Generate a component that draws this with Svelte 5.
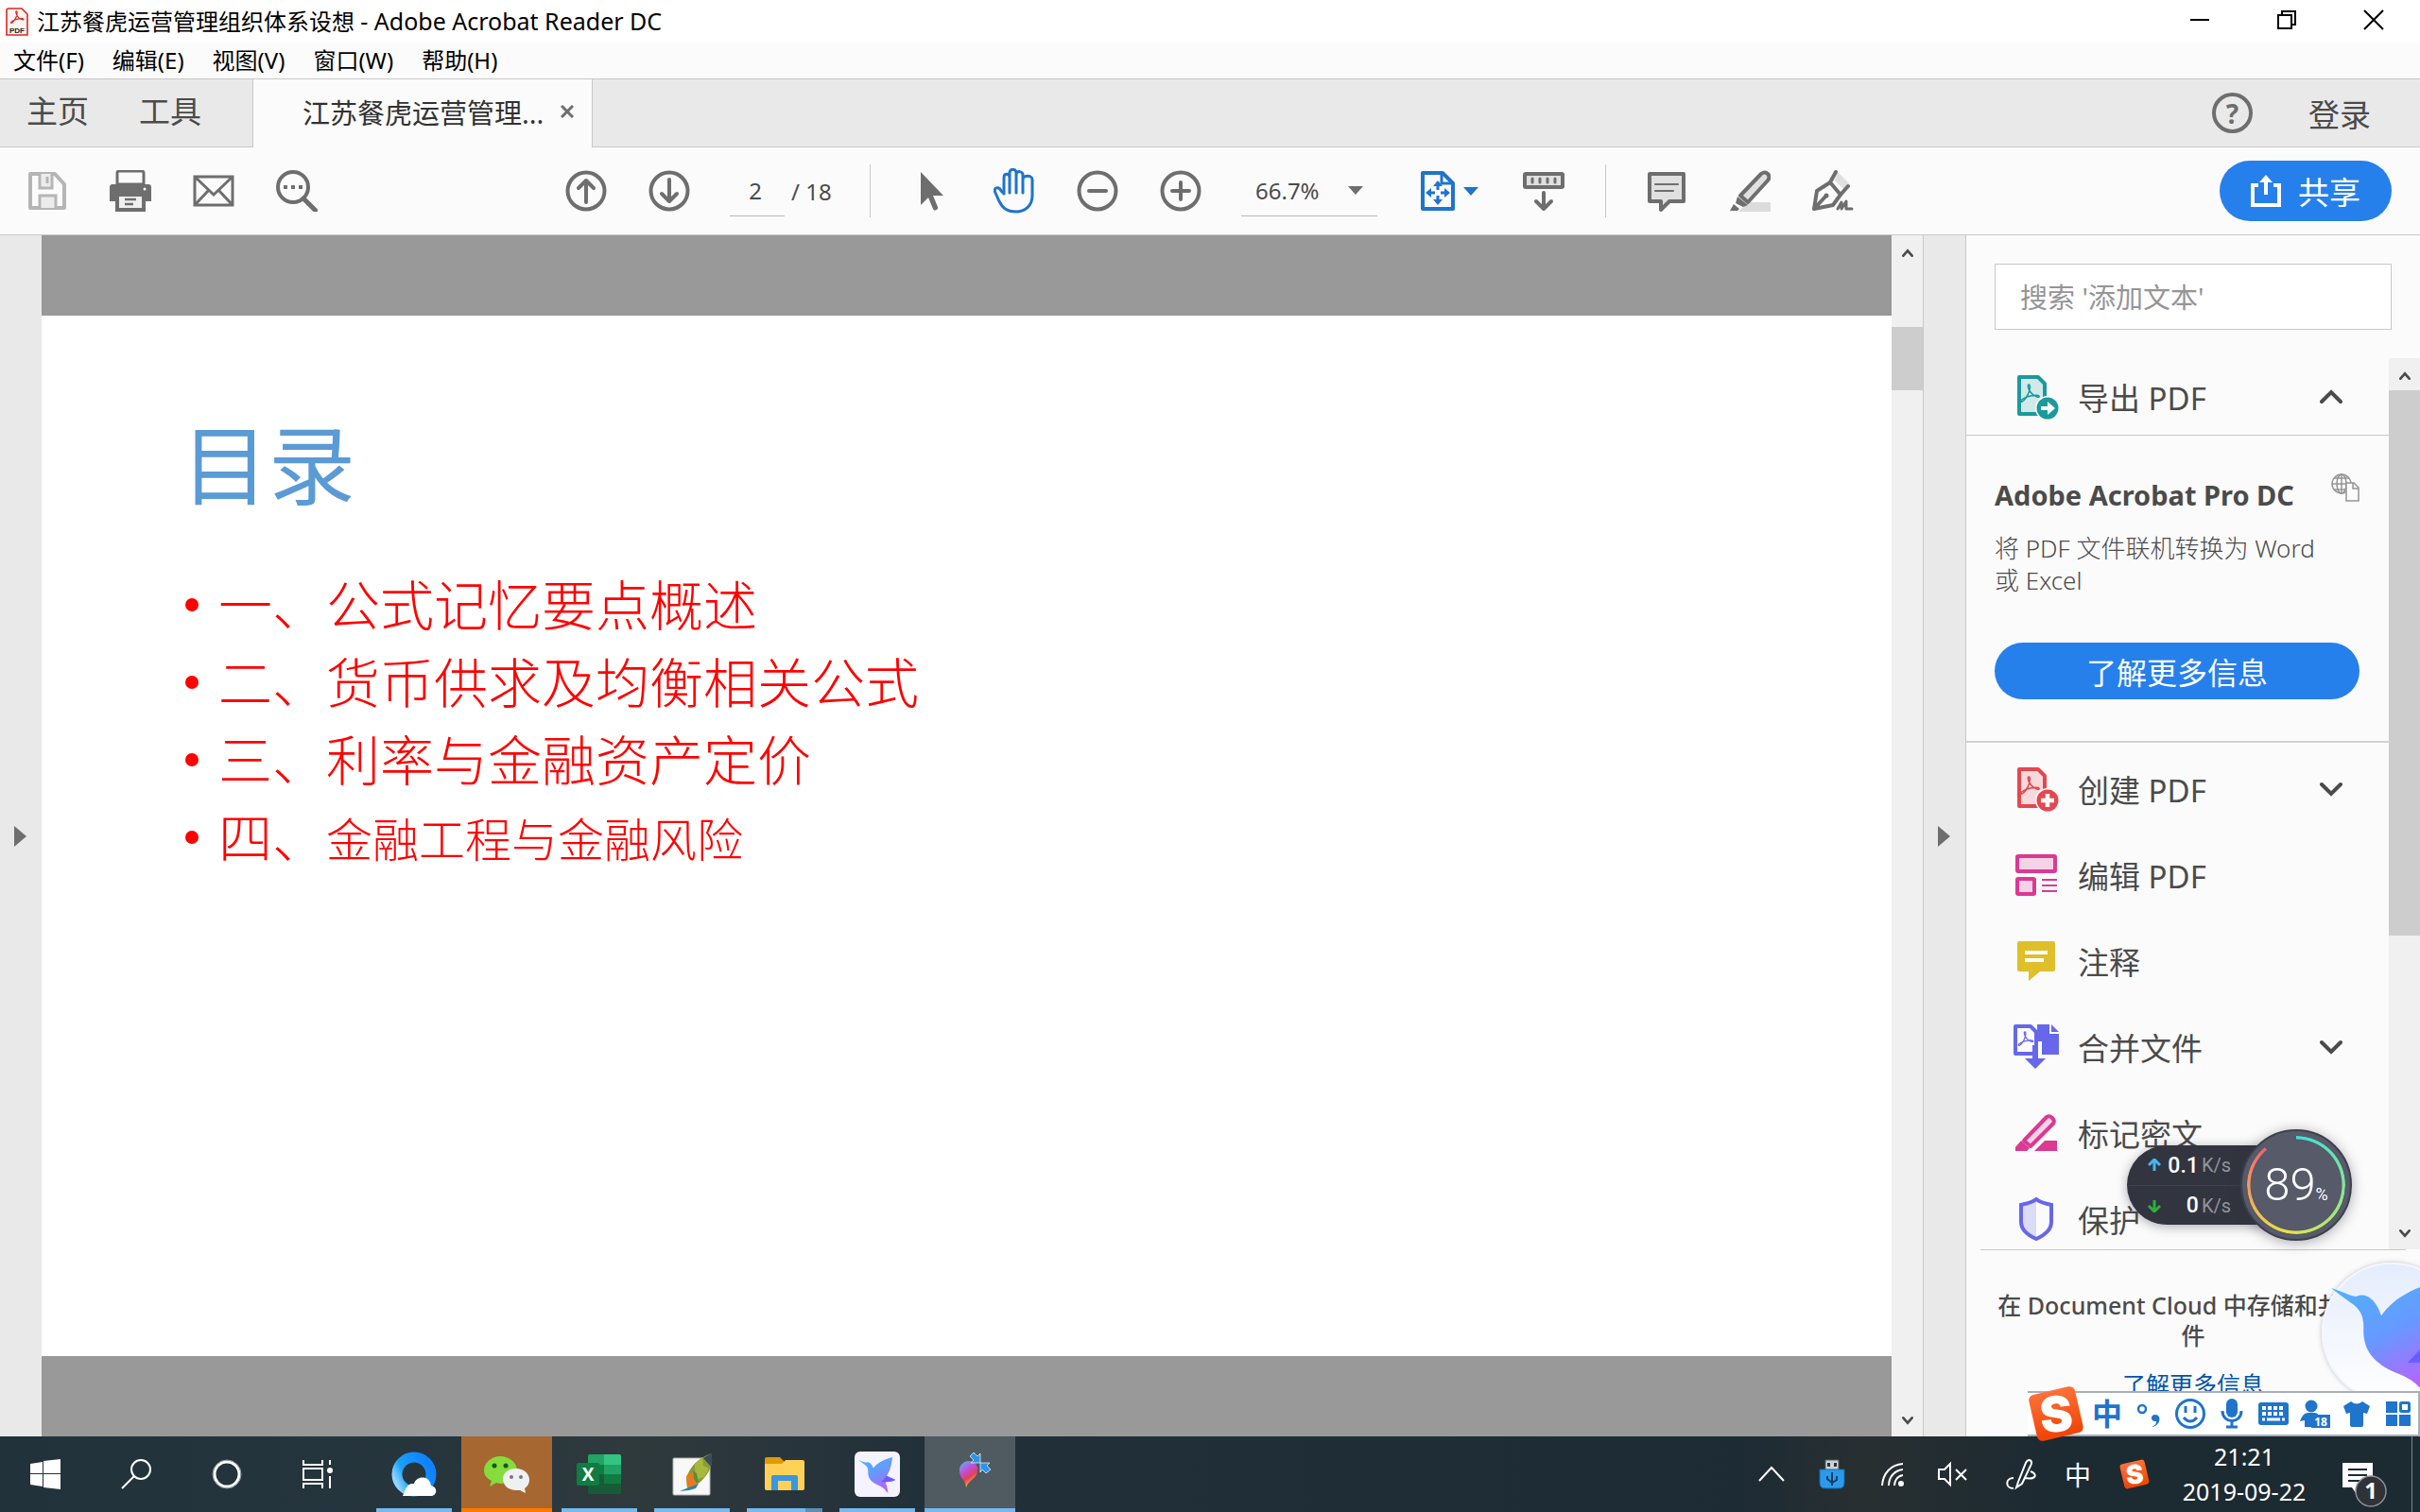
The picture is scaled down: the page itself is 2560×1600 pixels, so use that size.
<script>
  const menus = ['文件(F)', '编辑(E)', '视图(V)', '窗口(W)', '帮助(H)'];

  const tools = [
    { icon: 'create', label: '创建 PDF', more: true },
    { icon: 'edit', label: '编辑 PDF', more: false },
    { icon: 'note', label: '注释', more: false },
    { icon: 'combine', label: '合并文件', more: true },
    { icon: 'redact', label: '标记密文', more: false },
    { icon: 'protect', label: '保护', more: false }
  ];

  const tasks = [
    { icon: 'browser', label: 'QQ浏览器', className: '' },
    { icon: 'wechat', label: '微信', className: 'alert' },
    { icon: 'excel', label: 'Excel', className: '' },
    { icon: 'feather', label: '图片', className: '' },
    { icon: 'folder', label: '文件资源管理器', className: 'stacked' },
    { icon: 'bird', label: '迅雷', className: '' },
    { icon: 'paint', label: '画图 3D', className: 'active' }
  ];

  let page = $state('2');
  let search = $state('');
</script>

{#snippet swirl(color)}
  <path d="M16 11c2 0 2 5-1 11-3 5-6 8-7 7-1-2 5-5 10-6s10-1 9 1c-1 1-6-1-9-5s-3-8-2-8z" fill="none" stroke={color} stroke-width="1.6" />
{/snippet}

{#snippet sogou()}
  <defs>
    <linearGradient id="sg" x1="0" y1="0" x2="0" y2="1">
      <stop offset="0" stop-color="#ff7038" />
      <stop offset="1" stop-color="#ef4406" />
    </linearGradient>
  </defs>
  <rect x="5" y="5" width="50" height="50" rx="6" fill="url(#sg)" transform="rotate(-13 30 30)" />
  <text class="sogou-s" x="30" y="49" text-anchor="middle" transform="rotate(-6 30 30)">S</text>
{/snippet}

{#snippet hummingbird()}
  <defs>
    <linearGradient id="hb" x1="0.1" y1="0" x2="0.6" y2="1">
      <stop offset="0" stop-color="#4fb4f8" />
      <stop offset="0.5" stop-color="#6699ff" />
      <stop offset="1" stop-color="#c25cff" />
    </linearGradient>
  </defs>
  <path d="M2 15c8 3 12 5 17 6 6-3 13 1 17 13 10-14 24-19 44-26-2 20-7 34-13 44l20 9c-7 4-14 5-23 5 3 8 5 15 6 26-8-10-12-14-21-18-16-6-26-15-25-32 0-9-3-13-9-17-5-4-10-7-13-10z" fill="url(#hb)" />
  <path d="M67 52 54 66c10 0 25-1 33-5z" fill="#6a5cff" />
{/snippet}

{#snippet toolIcon(name)}
  <svg class="tool-icon" viewBox="0 0 48 48" aria-hidden="true">
    {#if name === 'export' || name === 'create'}
      {@const color = name === 'export' ? '#1c999c' : '#e34850'}
      <path d="M6 3h20l7 7v32H6z" fill={color} fill-opacity="0.18" stroke={color} stroke-width="4" stroke-linejoin="round" />
      {@render swirl(color)}
      <circle cx="36" cy="36" r="13" fill="#fbfbfb" />
      <circle cx="36" cy="36" r="11.5" fill={color} />
      {#if name === 'export'}
        <path d="M29 34h7v-5l8 7-8 7v-5h-7z" fill="#fff" />
      {:else}
        <path d="M36 29v14M29 36h14" stroke="#fff" stroke-width="4.5" />
      {/if}
    {:else if name === 'edit'}
      <g fill="#f5d3e6" stroke="#dc3993" stroke-width="4">
        <rect x="4" y="4" width="40" height="16" rx="1" />
        <rect x="4" y="28" width="18" height="16" rx="1" />
      </g>
      <path d="M30 29h16M30 35h16M30 41h16" stroke="#dc3993" stroke-width="2" />
    {:else if name === 'note'}
      <path d="M6 3h36q2 0 2 2v28q0 2-2 2H28l-12 10V35H6q-2 0-2-2V5q0-2 2-2z" fill="#dfbf2a" />
      <path d="M12 15h24M12 23h20" stroke="#fff" stroke-width="4" />
    {:else if name === 'combine'}
      <path d="M20 31H2V2h16l6 6v14" fill="none" stroke="#6767ec" stroke-width="4" stroke-linejoin="round" />
      <path d="M25 0h13v10h10v22H30V18h-5zM40 0l8 8h-8z" fill="#6767ec" />
      <g transform="translate(-1 -1) scale(0.8)">{@render swirl('#6767ec')}</g>
      <path d="M20 22h6v14h8L23 47 12 36h8z" fill="#6767ec" />
    {:else if name === 'redact'}
      <path d="M11 32 35 7q3-2 6 1t1 6L18 38z" fill="#f5d3e6" stroke="#dc3993" stroke-width="4" stroke-linejoin="round" />
      <path d="m8 32 9 8-3 3H2v-4zM22 43l11-11h13v11z" fill="#dc3993" />
    {:else if name === 'protect'}
      <path d="M24 3c5 4 11 5 16 6v18c0 9-7 15-16 19C15 42 8 36 8 27V9c5-1 11-2 16-6z" fill="#fbfbfb" />
      <path d="M24 4v40C15 40 8 35 8 27V9c6-1 11-2 16-5z" fill="#dcdcf8" />
      <path d="M24 3c5 4 11 5 16 6v18c0 9-7 14-16 18C15 41 8 36 8 27V9c5-1 11-2 16-6z" fill="none" stroke="#6767ec" stroke-width="4" />
    {/if}
  </svg>
{/snippet}

{#snippet taskIcon(name)}
  <svg class="task-icon" viewBox="0 0 48 48" aria-hidden="true">
    {#if name === 'browser'}
      <defs>
        <linearGradient id="qb" x1="0" y1="0.8" x2="1" y2="0.3">
          <stop offset="0" stop-color="#8fd6ff" />
          <stop offset="0.3" stop-color="#1b9ffa" />
          <stop offset="1" stop-color="#0f82ff" />
        </linearGradient>
      </defs>
      <circle cx="24" cy="24" r="18" fill="none" stroke="url(#qb)" stroke-width="11" />
      <path d="M12 47c3-8 5-14 12-13 2-8 16-10 18 2 8 2 6 11 0 11z" fill="#fff" />
    {:else if name === 'wechat'}
      <path d="M17 5c10 0 18 7 18 15s-8 14-18 14l-4-1-7 4 2-6C2 28 0 24 0 20 0 12 8 5 17 5z" fill="#86dc3c" />
      <circle cx="11" cy="15" r="2.5" fill="#14591e" />
      <circle cx="23" cy="15" r="2.5" fill="#14591e" />
      <path d="M34 18c8 0 14 5 14 12 0 4-2 7-5 9l1 5-6-3h-4c-8 0-14-5-14-12s6-11 14-11z" fill="#eef0f2" />
      <circle cx="29" cy="27" r="2" fill="#777" />
      <circle cx="39" cy="27" r="2" fill="#777" />
    {:else if name === 'excel'}
      <rect x="12" y="3" width="35" height="42" rx="2" fill="#185c37" />
      <path d="M12 5q0-2 2-2h15v11H12z" fill="#21a366" />
      <path d="M29 3h16q2 0 2 2v9H29z" fill="#33c481" />
      <path d="M12 14h17v10H12z" fill="#107c41" />
      <path d="M29 14h18v10H29z" fill="#21a366" />
      <path d="M29 24h18v10H29z" fill="#107c41" />
      <rect x="0" y="12" width="24" height="24" rx="2" fill="#107c41" />
      <text class="excel-x" x="12" y="31" text-anchor="middle">X</text>
    {:else if name === 'feather'}
      <rect x="4" y="7" width="39" height="39" rx="1" fill="#f8f8f8" stroke="#b5b5b5" />
      <path d="m11 42 8-3-1-10c3-13 13-22 26-27 4 11-3 25-16 34l-6 3-11 3z" fill="#8a9c33" />
      <path d="m27 13 8-7 1 9 6 3-5 9-9 3z" fill="#a8b83e" />
      <path d="m24 20 5 3 2 9-6 3z" fill="#5d8c3c" />
      <path d="m19 37-1-11c3-3 5-3 7-5l1 8 4 6-7 4z" fill="#e67a22" />
      <path d="M36 7l8-5c2 6 1 10 0 14z" fill="#3b4a5c" />
      <path d="m11 42 10-4 10-4-3 5-7 2z" fill="#2b86a8" />
    {:else if name === 'folder'}
      <path d="M3 8q0-2 2-2h14l4 4v5H3z" fill="#e09a00" />
      <path d="M3 13h18l4-4h18q2 0 2 2v28q0 2-2 2H5q-2 0-2-2z" fill="#ffd257" />
      <path d="M10 41V27q0-2 2-2h24q2 0 2 2v14h-7V31H17v10z" fill="#3a96dd" />
    {:else if name === 'bird'}
      <rect width="48" height="48" rx="6" fill="#f4f3ff" />
      <svg x="2" y="2" width="44" height="44" viewBox="0 0 90 96">{@render hummingbird()}</svg>
    {:else if name === 'paint'}
      <defs>
        <linearGradient id="p3" x1="0" y1="0" x2="0.5" y2="1">
          <stop offset="0" stop-color="#47c7f2" />
          <stop offset="0.4" stop-color="#bb55dd" />
          <stop offset="0.7" stop-color="#e23e62" />
          <stop offset="1" stop-color="#ffc500" />
        </linearGradient>
      </defs>
      <path d="M23 10c8 0 12 8 7 16-3 4-7 5-10 12-1-8-6-9-7-16-1-7 4-12 10-12z" fill="url(#p3)" />
      <path d="m24 5 4-4 4 4 3-3v10H25l3-3zM35 12h10l-3 3 4 4-5 4-4-4-2 3z" fill="#2b95e8" stroke="#fff" stroke-width="0.7" />
    {/if}
  </svg>
{/snippet}

{#snippet chevron(className, d)}
  <svg class={className} viewBox="0 0 24 24" aria-hidden="true"><path {d} fill="none" stroke="#4b4b4b" stroke-width="4" stroke-linecap="round" /></svg>
{/snippet}

<div class="desktop">
  <header class="title-bar">
    <svg class="app-icon" viewBox="0 0 24 30" aria-hidden="true">
      <path d="M3 1h14l6 6v22H1V3q0-2 2-2z" fill="#fff4f4" stroke="#e1251b" stroke-width="1.6" />
      <g transform="translate(0 -4) scale(0.7)">{@render swirl('#e1251b')}</g>
      <text class="app-icon-text" x="12" y="27" text-anchor="middle">PDF</text>
    </svg>
    <h1>江苏餐虎运营管理组织体系设想 <span>- Adobe Acrobat Reader DC</span></h1>
    <div class="window-buttons">
      <button aria-label="最小化"><svg viewBox="0 0 20 20"><path d="M0 10h20" /></svg></button>
      <button aria-label="还原"><svg viewBox="0 0 20 20"><path d="M1 5h14v14H1zM5 5V1h14v14h-4" /></svg></button>
      <button aria-label="关闭"><svg viewBox="0 0 20 20"><path d="m0 0 20 20M20 0 0 20" /></svg></button>
    </div>
  </header>

  <nav class="menu-bar">
    {#each menus as menu}
      <button>{menu}</button>
    {/each}
  </nav>

  <div class="tab-bar">
    <button class="home-tab">主页</button>
    <button class="home-tab">工具</button>
    <div class="doc-tab">
      <span>江苏餐虎运营管理...</span>
      <button aria-label="关闭标签">
        <svg viewBox="0 0 14 14"><path d="m1 1 12 12M13 1 1 13" stroke="#6e6e6e" stroke-width="3" /></svg>
      </button>
    </div>
    <div class="tab-right">
      <button class="help" aria-label="帮助">?</button>
      <button class="login">登录</button>
    </div>
  </div>

  <div class="toolbar">
    <div class="group">
      <button aria-label="保存">
        <svg viewBox="0 0 44 44">
          <path d="M4 4h26l10 11v25H4z" fill="none" stroke="#b5b5b5" stroke-width="4" stroke-linejoin="round" />
          <path d="M14 4v15h13V4M14 40V27h17v13" fill="#ececec" stroke="#b5b5b5" stroke-width="3" />
          <path d="M22 7v7" stroke="#b5b5b5" stroke-width="3" />
        </svg>
      </button>
      <button aria-label="打印">
        <svg viewBox="0 0 44 44">
          <path d="M8 15V3q0-2 2-2h24q2 0 2 2v12z" fill="#fbfbfb" stroke="#6e6e6e" stroke-width="3" />
          <path d="M3 15h38q3 0 3 3v15H0V18q0-3 3-3z" fill="#6e6e6e" />
          <path d="M8 26h28v16H8z" fill="#f0f0f0" stroke="#6e6e6e" stroke-width="4" />
          <path d="M16 31h12M16 36h9" stroke="#6e6e6e" stroke-width="2.5" />
          <circle cx="37" cy="20" r="1.5" fill="#fff" />
        </svg>
      </button>
      <button aria-label="邮件">
        <svg viewBox="0 0 44 44">
          <path d="M2 7h40v30H2zM2 7l20 19L42 7M2 37l15-16M42 37 27 21" fill="none" stroke="#6e6e6e" stroke-width="3" />
        </svg>
      </button>
      <button aria-label="查找">
        <svg viewBox="0 0 44 44">
          <circle cx="18" cy="18" r="16" fill="none" stroke="#6e6e6e" stroke-width="4" />
          <path d="m29 30 13 13" stroke="#6e6e6e" stroke-width="5" stroke-linecap="round" />
          <path d="M8 18h4M16 18h4M24 18h4" stroke="#6e6e6e" stroke-width="4" />
        </svg>
      </button>
    </div>

    <div class="group nav-group">
      <button aria-label="上一页">
        <svg viewBox="0 0 44 44"><circle cx="22" cy="22" r="19.5" /><path d="M22 34V11M14 19l8-8 8 8" /></svg>
      </button>
      <button aria-label="下一页">
        <svg viewBox="0 0 44 44"><circle cx="22" cy="22" r="19.5" /><path d="M22 10v23M14 25l8 8 8-8" /></svg>
      </button>
    </div>
    <input class="page-input" aria-label="页码" bind:value={page} />
    <span class="page-total">/ 18</span>
    <div class="divider"></div>

    <div class="group view-group">
      <button aria-label="选择">
        <svg viewBox="0 0 44 44"><path d="M11 2v35l8-8 5 12c1 3 6 1 5-2l-5-12h11z" fill="#6e6e6e" stroke="none" /></svg>
      </button>
      <button aria-label="手形工具">
        <svg class="hand" viewBox="0 0 44 48">
          <path d="M11 27V10c0-5 6-5 6 0V5c0-5 7-5 7 0v2c0-5 7-4 7 0v5c0-5 10-5 10 0v17c0 11-8 17-17 17-11 0-15-5-18-11L2 26c-3-6 4-7 6-2l3 3M17 10v16M24 5v21M31 9v17" />
        </svg>
      </button>
      <button aria-label="缩小">
        <svg viewBox="0 0 44 44"><circle cx="22" cy="22" r="19.5" /><path d="M13 22h18" /></svg>
      </button>
      <button aria-label="放大">
        <svg viewBox="0 0 44 44"><circle cx="22" cy="22" r="19.5" /><path d="M13 22h18M22 13v18" /></svg>
      </button>
    </div>
    <button class="zoom-level">66.7%<i class="caret"></i></button>
    <button class="fit" aria-label="适合页面">
      <svg viewBox="0 0 44 44">
        <path d="M6 3h21l11 11v27H6z" fill="none" stroke="#1f74cc" stroke-width="4" stroke-linejoin="round" />
        <path d="M26 3v11h12" fill="none" stroke="#1f74cc" stroke-width="3" />
        <path d="m22 11-5 6h10zM22 37l-5-6h10zM9 24l6-5v10zM35 24l-6-5v10z" fill="#1f74cc" />
        <path d="M22 16v5M22 27v5M14 24h5M25 24h5" stroke="#1f74cc" stroke-width="3" />
      </svg>
      <i class="caret blue"></i>
    </button>
    <button class="ruler" aria-label="滚动模式">
      <svg viewBox="0 0 44 44">
        <rect x="2" y="4" width="40" height="14" rx="1" fill="#e0e0e0" />
        <path d="M10 9v4M18 9v4M26 9v4M34 9v4" stroke-width="3" />
        <path d="M22 24v17M14 33l8 8 8-8" />
      </svg>
    </button>
    <div class="divider"></div>

    <div class="group mark-group">
      <button aria-label="注释">
        <svg viewBox="0 0 44 44">
          <path d="M4 4h36v29H25l-9 9v-9H4z" fill="#e0e0e0" />
          <path d="M10 15h24M10 22h19" stroke-width="2" />
        </svg>
      </button>
      <button aria-label="高亮">
        <svg viewBox="0 0 44 44">
          <path d="M20 34h24v10H10z" fill="#dcdcdc" stroke="none" />
          <path d="M12 27 34 4q4-3 7 0t0 7L20 34z" fill="#e0e0e0" />
          <path d="m9 28 11 9-5 2-8-4zM5 36l6 5-2 2H1z" fill="#6e6e6e" stroke="none" />
        </svg>
      </button>
      <button aria-label="签名">
        <svg viewBox="0 0 44 44">
          <path d="m24 11 3-9 12 12-5 7z" fill="#e0e0e0" stroke="none" />
          <path d="M2 41 5 22l14-9 11 13-8 11zM2 41l12-13M19 13l6-11M30 26l8-9" />
          <circle cx="15" cy="27" r="2.5" fill="#6e6e6e" stroke="none" />
          <path d="m27 41 4-7v7l5-8v8h6" stroke-width="3" />
        </svg>
      </button>
    </div>
    <button class="share">
      <svg viewBox="0 0 32 34" aria-hidden="true"><path d="M8 11H2v21h28V11h-6M16 21V4" fill="none" stroke="#fff" stroke-width="4" /><path d="m16 0 7 8H9z" fill="#fff" /></svg>
      共享
    </button>
  </div>

  <div class="workspace">
    <div class="gutter"><i class="arrow"></i></div>
    <main class="viewer">
      <article class="page">
        <h2>目录</h2>
        <ul>
          <li>一、公式记忆要点概述</li>
          <li>二、货币供求及均衡相关公式</li>
          <li>三、利率与金融资产定价</li>
          <li>四、<small>金融工程与金融风险</small></li>
        </ul>
      </article>
    </main>
    <div class="scrollbar doc-scroll">
      {@render chevron('scroll-arrow', 'm5 16 7-8 7 8')}
      <div class="thumb"></div>
      {@render chevron('scroll-arrow', 'm5 8 7 8 7-8')}
    </div>
    <div class="gutter right"><i class="arrow"></i></div>

    <aside>
      <div class="search-box">
        <input type="text" aria-label="搜索工具" placeholder="搜索 '添加文本'" bind:value={search} />
      </div>
      <div class="panel">
        <div class="panel-content">
          <button class="tool export">
            {@render toolIcon('export')}
            <span>导出 PDF</span>
            {@render chevron('toggle', 'm2 17 10-10 10 10')}
          </button>
          <section class="promo">
            <div class="promo-head">
              <h3>Adobe Acrobat Pro DC</h3>
              <svg viewBox="0 0 30 30" aria-hidden="true">
                <g fill="none" stroke="#959595" stroke-width="1.5">
                  <circle cx="11" cy="11" r="10" />
                  <ellipse cx="11" cy="11" rx="5" ry="10" />
                  <path d="M1 11h20M3 5h16M3 17h16M11 1v20" />
                  <path d="M16 10h8l5 5v14H16z" fill="#fbfbfb" />
                  <path d="M23 10v6h6" />
                </g>
              </svg>
            </div>
            <p>将 PDF 文件联机转换为 Word<br />或 Excel</p>
            <button class="learn">了解更多信息</button>
          </section>
          <div class="tool-list">
            {#each tools as tool}
              <button class="tool">
                {@render toolIcon(tool.icon)}
                <span>{tool.label}</span>
                {#if tool.more}
                  {@render chevron('toggle', 'm2 7 10 10L22 7')}
                {/if}
              </button>
            {/each}
          </div>
        </div>
        <div class="scrollbar panel-scroll">
          {@render chevron('scroll-arrow', 'm5 16 7-8 7 8')}
          <div class="thumb"></div>
          {@render chevron('scroll-arrow', 'm5 8 7 8 7-8')}
        </div>
      </div>
      <footer>
        <p>在 Document Cloud 中存储和共享文<br />件</p>
        <a href="#cloud">了解更多信息</a>
      </footer>
    </aside>
  </div>

  <div class="taskbar">
    <button class="task system" aria-label="开始">
      <svg viewBox="0 0 32 32"><path d="m0 5 13-2v12H0zM14 2l18-2v15H14zM0 16h13v13L0 27zM14 16h18v16l-18-2z" fill="#fff" /></svg>
    </button>
    <button class="task system" aria-label="搜索">
      <svg viewBox="0 0 32 32"><circle cx="21" cy="11" r="10" fill="none" stroke="#fff" stroke-width="2" /><path d="M14 18 1 31" stroke="#fff" stroke-width="2" /></svg>
    </button>
    <button class="task system" aria-label="Cortana">
      <svg viewBox="0 0 32 32"><circle cx="16" cy="16" r="13" fill="none" stroke="#fff" stroke-width="3" /><circle cx="16" cy="16" r="15" fill="none" stroke="#9aa3a7" stroke-width="1" /></svg>
    </button>
    <button class="task system" aria-label="任务视图">
      <svg viewBox="0 0 32 32"><path d="M1 1v5h20V1M1 10h20v12H1zM1 31v-5h20v5M29 1v5M29 18v13" fill="none" stroke="#fff" stroke-width="2" /><circle cx="29" cy="12" r="3" fill="#fff" /></svg>
    </button>
    <div class="running">
      {#each tasks as task}
        <button class="task {task.className}" aria-label={task.label}>{@render taskIcon(task.icon)}</button>
      {/each}
    </div>

    <div class="tray">
      <svg viewBox="0 0 32 32"><path d="m3 23 13-14 13 14" /></svg>
      <svg viewBox="0 0 32 32">
        <path d="M9 1h14v11H9z" fill="#cdd2d6" stroke="#555b60" stroke-width="1" />
        <path d="M11 4h3v4h-3zM18 4h3v4h-3z" fill="#333" stroke="none" />
        <path d="M3 11h26v14q0 6-6 6H9q-6 0-6-6z" fill="#2a9bea" stroke="#1769a8" stroke-width="1" />
        <path d="M16 14v14M11 18v3l5 4 5-3v-4" stroke="#123d66" />
      </svg>
      <svg viewBox="0 0 32 32"><path d="M5 28C6 15 14 6 27 5M12 28c0-9 6-16 15-17M18 28c0-5 3-10 9-11" /><circle cx="25" cy="26" r="3" fill="#fff" stroke="none" /></svg>
      <svg viewBox="0 0 32 32"><path d="M1 11h6l6-6v22l-6-6H1zM19 11l11 11M30 11 19 22" /></svg>
      <svg viewBox="0 0 32 32" class="tray-pen"><path d="M8 20c-9 0-9 11 0 11M13 24 21 4c3-6 8-2 5 3L17 26l-6 4zM26 13c8 3 6 9-6 7" /></svg>
      <span class="tray-ime">中</span>
      <svg viewBox="0 0 60 60" class="tray-sogou">{@render sogou()}</svg>
    </div>
    <div class="clock"><span>21:21</span><span>2019-09-22</span></div>
    <button class="notices" aria-label="通知">
      <svg viewBox="0 0 48 48">
        <path d="M0 0h32v26H20l-6 6-4-6H0z" fill="#fff" />
        <path d="M6 7h20M6 13h20M6 19h20" stroke="#1e2a32" stroke-width="2" />
        <circle cx="30" cy="30" r="16" fill="#2f3337" stroke="#8e9294" stroke-width="1.5" />
        <text class="count" x="30" y="38" text-anchor="middle">1</text>
      </svg>
    </button>
    <div class="show-desktop"></div>
  </div>

  <!-- floating desktop widgets -->
  <div class="net-speed">
    <div class="rates">
      <div><svg viewBox="0 0 14 14"><path d="M7 13V2M1 7l6-6 6 6" fill="none" stroke="#4ab4f0" stroke-width="3" /></svg><b>0.1</b><span>K/s</span></div>
      <div><svg viewBox="0 0 14 14"><path d="M7 1v11M1 7l6 6 6-6" fill="none" stroke="#2fae3e" stroke-width="3" /></svg><b>0</b><span>K/s</span></div>
    </div>
    <div class="dial"><div class="ring"></div><strong>89</strong><span>%</span></div>
  </div>

  <div class="bird-ball">
    <svg viewBox="0 0 90 96" aria-hidden="true">{@render hummingbird()}</svg>
  </div>

  <div class="ime-bar">
    <svg class="ime-logo" viewBox="0 0 60 60" aria-hidden="true">{@render sogou()}</svg>
    <b>中</b>
    <svg viewBox="0 0 32 32"><circle cx="9" cy="11" r="4" fill="none" stroke="#1f74cc" stroke-width="2.5" /><path d="M19 30c4-2 5-3 5-6-6 1-7-7-1-7 7 0 6 12-4 13z" fill="#1f74cc" /></svg>
    <svg viewBox="0 0 32 32"><circle cx="16" cy="16" r="14.5" fill="none" stroke="#1f74cc" stroke-width="3" /><path d="M11 8v7M21 8v7M9 20q7 8 14 0" fill="none" stroke="#1f74cc" stroke-width="3" /></svg>
    <svg viewBox="0 0 32 32"><rect x="10" y="0" width="12" height="20" rx="6" fill="#1f74cc" /><path d="M6 13c0 14 20 14 20 0M16 23v7M10 30h12" fill="none" stroke="#1f74cc" stroke-width="3" /></svg>
    <svg viewBox="0 0 32 32"><rect x="0" y="4" width="32" height="24" rx="3" fill="#1f74cc" /><path d="M4 10h24M4 16h24" stroke="#fff" stroke-width="4" stroke-dasharray="4 2" /><path d="M4 22h3M9 22h14M25 22h3" stroke="#fff" stroke-width="3" /></svg>
    <svg viewBox="0 0 32 32"><circle cx="12" cy="8" r="6.5" fill="#1f74cc" /><path d="M0 24c2-6 5-9 9-9h6c3 0 5 2 6 4v11H5v-7z" fill="#1f74cc" /><rect x="12" y="17" width="20" height="14" fill="#1f74cc" /><text class="badge-text" x="22" y="29" text-anchor="middle">18</text></svg>
    <svg viewBox="0 0 32 32"><path d="M10 3q6 5 12 0l8 5-3 8-4-1v13q0 2-2 2H11q-2 0-2-2V15l-4 1-3-8z" fill="#1f74cc" /></svg>
    <svg viewBox="0 0 32 32"><path d="M3 3h12v12H3zM3 17h12v12H3zM17 17h12v12H17z" fill="#1f74cc" /><rect x="18.5" y="4.5" width="9" height="9" rx="1" fill="none" stroke="#1f74cc" stroke-width="3" /></svg>
  </div>
</div>

<style>
  :global(body) {
    margin: 0;
  }
  .desktop {
    position: relative;
    display: flex;
    flex-direction: column;
    height: 100vh;
    overflow: hidden;
    background: #fbfbfb;
    color: #4b4b4b;
    font-family: 'Noto Sans', 'Noto Sans CJK SC', sans-serif;
    font-size: 24px;
  }
  button,
  input {
    box-sizing: border-box;
    padding: 0;
    border: 0;
    background: none;
    color: inherit;
    font: inherit;
  }
  svg {
    display: block;
    flex: none;
  }
  h1, h2, h3, p, ul {
    margin: 0;
    padding: 0;
  }

  .title-bar {
    display: flex;
    align-items: center;
    height: 45px;
    padding-left: 6px;
    background: #fff;
    color: #000;
  }
  .app-icon {
    width: 24px;
    height: 30px;
    margin-right: 9px;
  }
  .app-icon-text {
    font: bold 8px 'Liberation Sans', sans-serif;
    fill: #222;
  }
  h1 {
    flex: 1;
    font-size: 24px;
    font-weight: 400;
    line-height: 40px;
  }
  h1 span {
    font-size: 25px;
  }
  .window-buttons {
    display: flex;
    align-self: flex-start;
  }
  .window-buttons button {
    display: grid;
    place-items: center;
    width: 92px;
    height: 42px;
  }
  .window-buttons button:last-child {
    width: 95px;
    padding-right: 3px;
  }
  .window-buttons svg {
    width: 20px;
    height: 20px;
    overflow: visible;
    fill: none;
    stroke: #000;
    stroke-width: 2;
  }

  .menu-bar {
    display: flex;
    gap: 30px;
    height: 38px;
    padding-left: 14px;
    border-bottom: 1px solid #c8c8c8;
    color: #000;
    line-height: 38px;
  }

  .tab-bar {
    display: flex;
    height: 71px;
    background: #e9e9e9;
    border-bottom: 1px solid #c8c8c8;
  }
  .home-tab {
    width: 66px;
    margin-left: 28px;
    padding-bottom: 8px;
    font-size: 33px;
  }
  .home-tab + .home-tab {
    margin-left: 53px;
  }
  .doc-tab {
    display: flex;
    align-items: center;
    gap: 18px;
    box-sizing: border-box;
    width: 360px;
    height: 72px;
    margin-left: 54px;
    padding: 0 0 4px 52px;
    border: solid #c8c8c8;
    border-width: 0 1px;
    background: #fbfbfb;
    color: #323232;
    font-size: 29px;
    white-space: nowrap;
  }
  .doc-tab svg {
    width: 14px;
    height: 14px;
  }
  .tab-right {
    display: flex;
    align-items: center;
    gap: 59px;
    margin-left: auto;
    padding-right: 52px;
  }
  .help {
    width: 43px;
    height: 43px;
    border: 4px solid #6e6e6e;
    border-radius: 50%;
    color: #6e6e6e;
    font-size: 28px;
    font-weight: 700;
    line-height: 34px;
  }
  .login {
    font-size: 33px;
  }

  .toolbar {
    display: flex;
    align-items: center;
    height: 92px;
    padding: 0 30px 0 28px;
    border-bottom: 1px solid #c8c8c8;
  }
  .group {
    display: flex;
    gap: 44px;
  }
  .toolbar button svg {
    width: 44px;
    height: 44px;
  }
  .nav-group {
    margin-left: 262px;
  }
  .nav-group svg,
  .view-group svg,
  .ruler svg,
  .mark-group svg {
    fill: none;
    stroke: #6e6e6e;
    stroke-width: 4;
    stroke-linecap: round;
    stroke-linejoin: round;
  }
  .view-group {
    align-items: center;
    margin-left: 42px;
  }
  .toolbar .hand {
    height: 48px;
    stroke: #1f74cc;
    stroke-width: 3;
  }
  .page-input {
    width: 58px;
    height: 54px;
    margin-left: 42px;
    padding-right: 4px;
    border-bottom: 1px solid #b8b8b8;
    text-align: center;
  }
  .page-total {
    width: 83px;
    margin-left: 7px;
  }
  .divider {
    width: 1px;
    height: 56px;
    background: #c8c8c8;
  }
  .zoom-level {
    display: flex;
    align-items: center;
    justify-content: space-between;
    width: 144px;
    height: 54px;
    margin-left: 42px;
    padding: 0 15px;
    border-bottom: 1px solid #b8b8b8;
  }
  .caret {
    border: 8px solid transparent;
    border-top: 9px solid #6e6e6e;
    border-bottom: 0;
  }
  .caret.blue {
    border-top-color: #1f74cc;
  }
  .fit {
    display: flex;
    align-items: center;
    gap: 5px;
    margin-left: 42px;
  }
  .ruler {
    margin: 0 43px 0 47px;
  }
  .mark-group {
    margin-left: 42px;
  }
  .share {
    display: flex;
    align-items: center;
    justify-content: center;
    gap: 18px;
    width: 182px;
    height: 64px;
    margin-left: auto;
    border-radius: 32px;
    background: #2680eb;
    color: #fff;
    font-size: 33px;
  }
  .toolbar .share svg {
    width: 32px;
    height: 34px;
  }

  .workspace {
    display: flex;
    flex: 1;
    min-height: 0;
  }
  .gutter {
    display: flex;
    align-items: center;
    box-sizing: border-box;
    width: 44px;
    padding-left: 15px;
    background: #e9e9e9;
  }
  .gutter.right {
    width: 46px;
    border: solid #c8c8c8;
    border-width: 0 1px;
  }
  .arrow {
    border: 11px solid transparent;
    border-left: 13px solid #6e6e6e;
    border-right: 0;
  }
  .viewer {
    flex: 1;
    padding: 85px 0;
    background: #999;
  }
  .page {
    box-sizing: border-box;
    height: 100%;
    padding: 88px 148px;
    background: #fff;
  }
  h2 {
    color: #5b9bd5;
    font-size: 92px;
    font-weight: 400;
    line-height: 140px;
  }
  ul {
    margin: 37px 0 0 4px;
    list-style: none;
    color: #f00;
    font-size: 57px;
    font-weight: 300;
    line-height: 82px;
  }
  li {
    display: flex;
    align-items: center;
    height: 82px;
  }
  li::before {
    width: 14px;
    height: 14px;
    margin-right: 21px;
    border-radius: 50%;
    background: #f00;
    content: '';
  }
  li small {
    padding-top: 4px;
    font-size: 49px;
  }

  .scrollbar {
    display: flex;
    flex-direction: column;
    align-items: center;
    width: 33px;
    background: #f0f0f0;
  }
  .scroll-arrow {
    width: 16px;
    height: 16px;
    margin: 11px 0 7px;
  }
  .scroll-arrow:last-child {
    margin: auto 0 9px;
  }
  .thumb {
    align-self: stretch;
    background: #cdcdcd;
  }
  .doc-scroll .thumb {
    height: 67px;
    margin-top: 63px;
  }

  aside {
    display: flex;
    flex-direction: column;
    width: 480px;
  }
  .search-box {
    padding: 30px;
  }
  .search-box input {
    width: 100%;
    height: 70px;
    padding: 0 26px;
    border: 1px solid #c8c8c8;
    background: #fff;
    font-size: 29px;
  }
  .search-box input::placeholder {
    color: #959595;
  }
  .panel {
    display: flex;
    flex: 1;
    min-height: 0;
  }
  .panel-content {
    flex: 1;
    overflow: hidden;
  }
  .panel-scroll .thumb {
    height: 577px;
  }
  .tool {
    display: flex;
    align-items: center;
    gap: 20px;
    width: 100%;
    height: 91px;
    padding: 0 49px 0 50px;
    font-size: 33px;
    text-align: left;
  }
  .tool.export {
    height: 82px;
    border-bottom: 1px solid #c8c8c8;
  }
  .tool span {
    flex: 1;
  }
  .tool-icon {
    width: 48px;
    height: 48px;
  }
  .toggle {
    width: 24px;
    height: 24px;
  }
  .promo {
    padding: 40px 31px 44px 30px;
    border-bottom: 2px solid #d2d2d2;
  }
  .promo-head {
    display: flex;
    justify-content: space-between;
  }
  .promo-head svg {
    width: 30px;
    height: 30px;
  }
  h3 {
    font-size: 29px;
    font-weight: 700;
    line-height: 46px;
  }
  .promo p {
    margin: 16px 0 49px;
    font-size: 26px;
    font-weight: 300;
    line-height: 34px;
    white-space: nowrap;
  }
  .learn {
    width: 100%;
    height: 60px;
    border-radius: 30px;
    background: #2680eb;
    color: #fff;
    font-size: 32px;
  }
  .tool-list {
    padding-top: 3px;
  }
  footer {
    box-sizing: border-box;
    height: 198px;
    margin: 0 15px;
    padding: 42px 15px 0;
    border-top: 1px solid #c8c8c8;
    text-align: center;
  }
  footer p {
    font-size: 25px;
    font-weight: 500;
    line-height: 32px;
    white-space: nowrap;
  }
  footer a {
    display: block;
    margin-top: 18px;
    color: #0054a8;
    font-size: 25px;
    line-height: 36px;
    text-decoration: none;
  }

  .taskbar {
    display: flex;
    height: 80px;
    background: linear-gradient(90deg, #21323b, #27363d 20%, #2f3a3d 26%, #22303a 38%, #1d2b35 72%, #282f31 77%, #1c2a32 85%);
    color: #fff;
  }
  .task {
    position: relative;
    display: grid;
    place-items: center;
    width: 96px;
    height: 80px;
  }
  .system svg {
    width: 32px;
    height: 32px;
  }
  .running {
    display: flex;
    gap: 2px;
    margin-left: 6px;
  }
  .task-icon {
    width: 48px;
    height: 48px;
  }
  .running .task::after {
    position: absolute;
    right: 8px;
    bottom: 0;
    left: 8px;
    height: 4px;
    background: #76b9ed;
    content: '';
  }
  .running .alert {
    background: #a76730;
  }
  .running .alert::after {
    right: 0;
    left: 0;
    background: #ff7800;
  }
  .running .active {
    background: #4f5a61;
  }
  .running .active::after {
    right: 0;
    left: 0;
  }
  .running .stacked::after {
    background: linear-gradient(90deg, #76b9ed 62px, #5d8fb4 62px);
  }
  .excel-x {
    font: bold 19px 'Open Sans', sans-serif;
    fill: #fff;
  }
  .tray {
    display: flex;
    align-items: center;
    gap: 32px;
    margin-left: auto;
  }
  .tray svg {
    width: 32px;
    height: 32px;
    overflow: visible;
    fill: none;
    stroke: #fff;
    stroke-width: 2;
  }
  .tray .tray-pen {
    margin-left: 8px;
  }
  .tray .tray-sogou {
    stroke: none;
  }
  .tray-ime {
    display: flex;
    justify-content: center;
    width: 24px;
    font-size: 28px;
  }
  .sogou-s {
    font: 900 52px Inter, sans-serif;
    fill: #fff;
  }
  .clock {
    display: flex;
    flex-direction: column;
    width: 200px;
    padding-top: 3px;
    font-size: 25px;
    line-height: 37px;
    text-align: center;
  }
  .notices {
    padding: 24px 0 0 4px;
  }
  .notices svg {
    width: 48px;
    height: 48px;
  }
  .count {
    font: bold 24px 'Open Sans', sans-serif;
    fill: #fff;
  }
  .show-desktop {
    width: 8px;
    margin-left: 25px;
    border-left: 1px solid #7b858a;
  }

  .net-speed {
    position: absolute;
    right: 72px;
    bottom: 287px;
    display: flex;
    align-items: center;
  }
  .rates {
    width: 158px;
    margin-right: -38px;
    border-radius: 42px 0 0 42px;
    background: #32353f;
    box-shadow: 0 2px 12px rgba(50, 50, 70, 0.4);
    color: #fff;
  }
  .rates div {
    display: flex;
    align-items: center;
    box-sizing: border-box;
    height: 42px;
    padding: 0 48px 0 22px;
  }
  .rates div + div {
    border-top: 1px solid #40444e;
  }
  .rates svg {
    width: 14px;
    height: 14px;
    margin-right: auto;
  }
  .rates b {
    font: 500 23px Roboto, sans-serif;
  }
  .rates span {
    margin-left: 3px;
    color: #91949c;
    font: 20px Roboto, sans-serif;
  }
  .dial {
    position: relative;
    display: flex;
    align-items: baseline;
    justify-content: center;
    box-sizing: border-box;
    width: 118px;
    height: 118px;
    border: 2px solid #3c404c;
    border-radius: 50%;
    background: #565a69;
    box-shadow: 0 2px 14px rgba(50, 50, 70, 0.4);
    color: #fff;
    font-family: Roboto, sans-serif;
    line-height: 114px;
  }
  .dial strong {
    font-size: 49px;
    font-weight: 300;
  }
  .dial span {
    font-size: 18px;
  }
  .ring {
    position: absolute;
    inset: 5px;
    border-radius: 50%;
    background: conic-gradient(#3fe0d8, #7be6a0 80deg, #a8e678 130deg, #e6e34a 190deg, #f3c24e 230deg, #f79a5a 270deg, #f4606c 320deg, transparent 320deg);
    mask: radial-gradient(circle, transparent 48px, #000 49px);
  }

  .bird-ball {
    position: absolute;
    right: -44px;
    bottom: 116px;
    box-sizing: border-box;
    width: 148px;
    height: 148px;
    padding: 1px 0 0 5px;
    border: 2px solid #f4f6fb;
    border-radius: 50%;
    background: linear-gradient(#e4ecfc, #fff);
    box-shadow: 0 0 5px rgba(80, 80, 110, 0.35);
  }
  .bird-ball svg {
    width: 140px;
    height: 150px;
  }

  .ime-bar {
    position: absolute;
    right: 0;
    bottom: 80px;
    display: flex;
    align-items: center;
    gap: 12px;
    box-sizing: border-box;
    height: 48px;
    padding-right: 5px;
    border: 2px solid #a9afb9;
    border-left: 0;
    background: #fff;
  }
  .ime-bar svg {
    width: 32px;
    height: 32px;
    overflow: visible;
  }
  .ime-bar .ime-logo {
    width: 60px;
    height: 60px;
    margin-right: -4px;
  }
  .ime-bar b {
    width: 32px;
    color: #1f74cc;
    font-size: 32px;
    line-height: 32px;
  }
  .badge-text {
    font: bold 12px 'Open Sans', sans-serif;
    fill: #fff;
  }
</style>
